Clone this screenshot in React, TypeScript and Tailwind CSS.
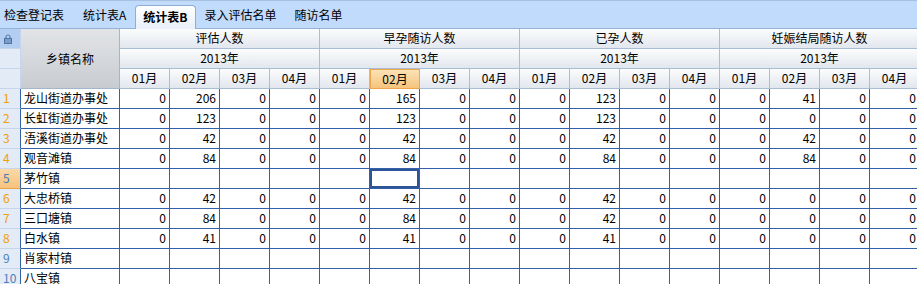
import { Fragment } from "react";

type Row = { name: string; values: number[] | null };

const groups = ["评估人数", "早孕随访人数", "已孕人数", "妊娠结局随访人数"];
const months = ["01月", "02月", "03月", "04月"];

const rows: Row[] = [
  { name: "龙山街道办事处", values: [0, 206, 0, 0, 0, 165, 0, 0, 0, 123, 0, 0, 0, 41, 0, 0] },
  { name: "长虹街道办事处", values: [0, 123, 0, 0, 0, 123, 0, 0, 0, 123, 0, 0, 0, 0, 0, 0] },
  { name: "浯溪街道办事处", values: [0, 42, 0, 0, 0, 42, 0, 0, 0, 42, 0, 0, 0, 42, 0, 0] },
  { name: "观音滩镇", values: [0, 84, 0, 0, 0, 84, 0, 0, 0, 84, 0, 0, 0, 84, 0, 0] },
  { name: "茅竹镇", values: null },
  { name: "大忠桥镇", values: [0, 42, 0, 0, 0, 42, 0, 0, 0, 42, 0, 0, 0, 0, 0, 0] },
  { name: "三口塘镇", values: [0, 84, 0, 0, 0, 84, 0, 0, 0, 42, 0, 0, 0, 0, 0, 0] },
  { name: "白水镇", values: [0, 41, 0, 0, 0, 41, 0, 0, 0, 41, 0, 0, 0, 0, 0, 0] },
  { name: "肖家村镇", values: null },
  { name: "八宝镇", values: null },
];

const tabs = ["检查登记表", "统计表A", "统计表B", "录入评估名单", "随访名单"];

const hdr =
  "h-[20px] box-border border-r border-b border-[#a9bdd6] bg-gradient-to-b from-[#fbfcfd] to-[#e2e7ee] flex items-center justify-center pb-[1px]";
const rowHdr =
  "h-[20px] box-border border-r border-b border-[#c6d5e9] bg-[#e3ebf6]";
const cell =
  "h-[20px] box-border border-r border-b border-[#3360a6] bg-white flex items-center justify-end pr-[3px] pb-[2px]";

function Lock() {
  return (
    <svg width="8" height="10" viewBox="0 0 8 10" className="ml-[4px]">
      <path d="M2 4.5V3a2 2 0 0 1 4 0v1.5" fill="none" stroke="#5a7fb0" strokeWidth="1.2" />
      <rect x="0.5" y="4.5" width="7" height="5" fill="#7d9cc6" stroke="#4f73a6" strokeWidth="1" />
    </svg>
  );
}

export default function App() {
  return (
    <div
      className="w-[917px] h-[284px] overflow-hidden bg-white text-[12px] leading-none text-black"
      style={{ fontFamily: '"Noto Sans CJK SC", "Liberation Sans", sans-serif' }}
    >
      {/* tab strip */}
      <div className="h-[29px] box-border border-t border-t-[#a7c0e0] border-b border-b-[#95b3da] bg-[#c1dbfc] flex items-end pl-[4px]">
        {tabs.map((t, i) =>
          i === 2 ? (
            <div
              key={t}
              className="h-[24px] mb-[-1px] px-[7px] pb-[2px] flex items-center rounded-t-[4px] border border-b-0 border-[#8eaed6] bg-gradient-to-b from-white to-[#e9f0f9] font-bold"
            >
              {t}
            </div>
          ) : (
            <div key={t} className={`h-[24px] pb-[3px] flex items-center ${i === 0 ? "pr-[10px]" : "px-[9px]"}`}>
              {t}
            </div>
          )
        )}
      </div>

      {/* grid */}
      <div className="grid grid-cols-[21px_99px_repeat(16,50px)] auto-rows-[20px] w-[920px]">
        <div className={`${rowHdr} !bg-[#b3cef0] flex items-center`}>
          <Lock />
        </div>
        <div className="row-span-3 box-border border-r border-b border-[#a3b6cc] bg-gradient-to-b from-[#e2e4e7] to-[#c8ccd1] flex items-center justify-center">
          乡镇名称
        </div>
        {groups.map((g) => (
          <div key={g} className={`${hdr} col-span-4`}>
            {g}
          </div>
        ))}

        <div className={rowHdr} />
        {groups.map((g) => (
          <div key={g} className={`${hdr} col-span-4`}>
            2013年
          </div>
        ))}

        <div className={rowHdr} />
        {groups.map((g, gi) =>
          months.map((m, mi) =>
            gi === 1 && mi === 1 ? (
              <div
                key={g + m}
                className="h-[20px] box-border border border-[#f1a54a] bg-gradient-to-b from-[#fbe2b6] to-[#f5c47c] flex items-center justify-center pb-[1px]"
              >
                {m}
              </div>
            ) : (
              <div key={g + m} className={hdr}>
                {m}
              </div>
            )
          )
        )}

        {rows.map((r, ri) => {
          const selected = ri === 4;
          return (
            <Fragment key={r.name}>
              <div
                className={`h-[20px] box-border border-r border-r-[#3360a6] border-b flex items-center pl-[3px] pb-[2px] ${
                  selected
                    ? "border-b-[#e9a64c] bg-gradient-to-b from-[#fbd9a8] to-[#f6c27e] text-[#3f78b8]"
                    : `border-b-[#c6d5e9] bg-[#e3ebf6] ${r.values ? "text-[#f0a000]" : "text-[#4a7fba]"}`
                }`}
              >
                {ri + 1}
              </div>
              <div className="h-[20px] box-border border-r border-b border-[#3360a6] bg-white flex items-center pl-[3px] pb-[2px]">
                {r.name}
              </div>
              {Array.from({ length: 16 }).map((_, ci) => (
                <div
                  key={ci}
                  className={`${cell} ${selected && ci === 5 ? "shadow-[inset_0_0_0_2px_#2c5597]" : ""}`}
                >
                  {r.values ? r.values[ci] : ""}
                </div>
              ))}
            </Fragment>
          );
        })}
      </div>
    </div>
  );
}
